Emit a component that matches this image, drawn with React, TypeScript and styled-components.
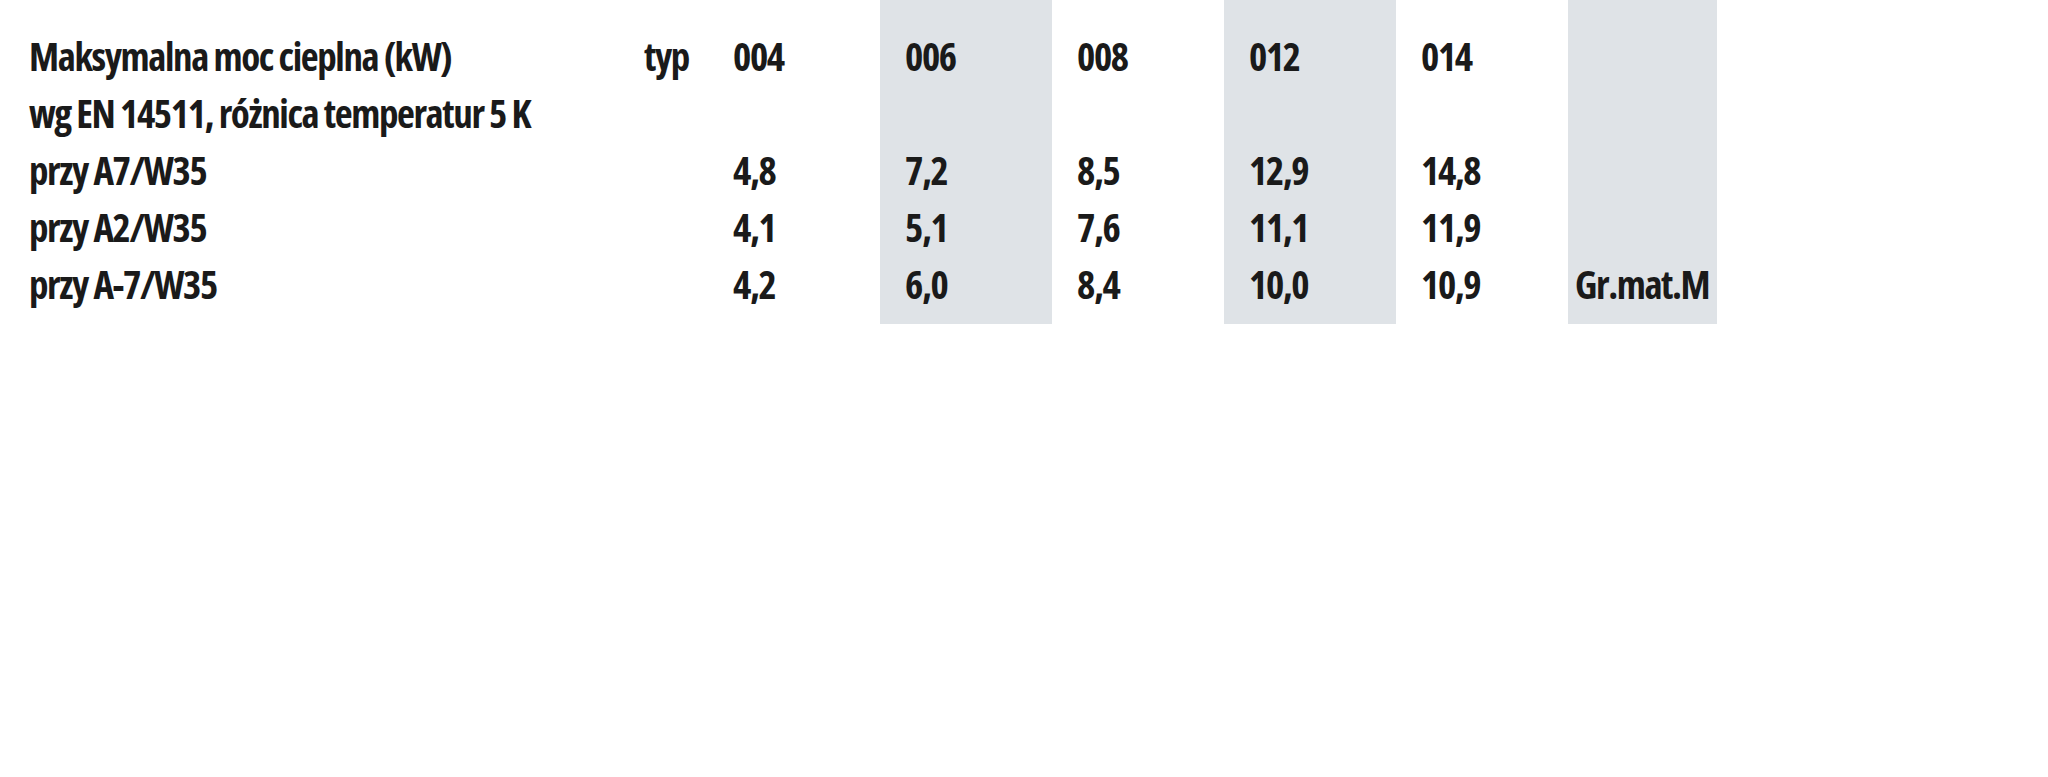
import React from 'react';
import styled, { createGlobalStyle } from 'styled-components';

const GlobalStyle = createGlobalStyle`
  body {
    margin: 0;
    background: #ffffff;
  }
`;

const Sheet = styled.div`
  display: flex;
  align-items: stretch;
  font-family: 'Open Sans', 'Roboto Condensed', sans-serif;
  font-stretch: 75%;
  font-weight: 700;
  font-size: 39px;
  letter-spacing: -1.4px;
  color: #1a1a1a;
`;

const Column = styled.div<{ $width: number; $pad: number; $shaded?: boolean }>`
  display: flex;
  flex-direction: column;
  width: ${(p) => p.$width}px;
  padding: 27px 0 12px ${(p) => p.$pad}px;
  box-sizing: border-box;
  background: ${(p) => (p.$shaded ? '#dfe3e7' : 'transparent')};
`;

const Cell = styled.div`
  height: 57px;
  line-height: 57px;
  white-space: nowrap;
`;

const labels = [
  'Maksymalna moc cieplna (kW)',
  'wg EN 14511, różnica temperatur 5 K',
  'przy A7/W35',
  'przy A2/W35',
  'przy A-7/W35',
];

const models = [
  { name: '004', values: ['4,8', '4,1', '4,2'], shaded: false },
  { name: '006', values: ['7,2', '5,1', '6,0'], shaded: true },
  { name: '008', values: ['8,5', '7,6', '8,4'], shaded: false },
  { name: '012', values: ['12,9', '11,1', '10,0'], shaded: true },
  { name: '014', values: ['14,8', '11,9', '10,9'], shaded: false },
];

export default function App() {
  return (
    <>
      <GlobalStyle />
      <Sheet>
        <Column $width={644} $pad={29}>
          {labels.map((label) => (
            <Cell key={label}>{label}</Cell>
          ))}
        </Column>
        <Column $width={64} $pad={0}>
          <Cell>typ</Cell>
        </Column>
        {models.map((m) => (
          <Column key={m.name} $width={172} $pad={25} $shaded={m.shaded}>
            <Cell>{m.name}</Cell>
            <Cell />
            {m.values.map((v, i) => (
              <Cell key={i}>{v}</Cell>
            ))}
          </Column>
        ))}
        <Column $width={149} $pad={7} $shaded>
          <Cell />
          <Cell />
          <Cell />
          <Cell />
          <Cell>Gr.mat.M</Cell>
        </Column>
      </Sheet>
    </>
  );
}
